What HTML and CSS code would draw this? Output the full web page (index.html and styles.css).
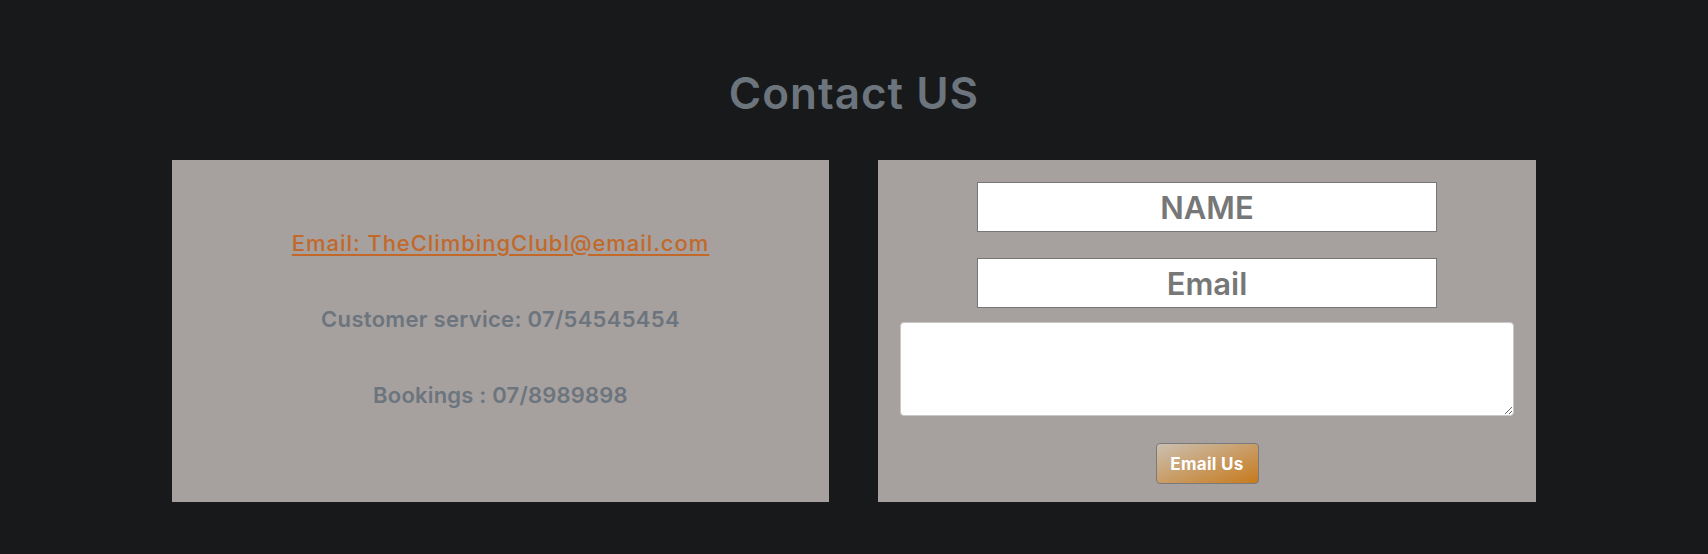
FILE: index.html
```html
<!DOCTYPE html>
<html lang="en">
<head>
<meta charset="utf-8">
<title>Contact US</title>
<link rel="stylesheet" href="styles.css">
</head>
<body>
<section class="contact">
  <h1 class="contact-title">Contact US</h1>
  <div class="cards">
    <div class="card card-info">
      <a class="info-link" href="#">Email: TheClimbingClubl@email.com</a>
      <p class="info-line">Customer service: 07/54545454</p>
      <p class="info-line info-line-short">Bookings : 07/8989898</p>
    </div>
    <form class="card card-form">
      <input class="field" type="text" placeholder="NAME">
      <input class="field field-email" type="email" placeholder="Email">
      <textarea class="message"></textarea>
      <button class="send" type="button">Email Us</button>
    </form>
  </div>
</section>
</body>
</html>
```
FILE: styles.css
```css
* { box-sizing: border-box; }

body {
  margin: 0;
  background: #18191b;
  font-family: Inter, "Open Sans", "Liberation Sans", sans-serif;
}

.contact {
  padding-top: 67px;
}

.contact-title {
  margin: 0;
  text-align: center;
  color: #6c757d;
  font-size: 44px;
  font-weight: 600;
  line-height: 53px;
  letter-spacing: 1px;
}

.cards {
  display: flex;
  justify-content: center;
  gap: 49px;
  margin-top: 40px;
}

.card {
  width: 657px;
  height: 342px;
  background: #a6a09f;
  margin: 0;
}

.card-info {
  display: flex;
  flex-direction: column;
  align-items: center;
  padding-top: 67px;
  gap: 43px;
}

.info-link {
  color: #c2692a;
  font-size: 22px;
  font-weight: 500;
  line-height: 33px;
  letter-spacing: 0.95px;
  text-decoration: underline;
  text-decoration-thickness: 2px;
  text-underline-offset: 3px;
}

.info-line {
  margin: 0;
  color: #6c757d;
  font-size: 22px;
  font-weight: 600;
  line-height: 33px;
  letter-spacing: 0.3px;
}

.info-line-short {
  letter-spacing: 0.2px;
}

.card-form {
  width: 658px;
  display: flex;
  flex-direction: column;
  align-items: center;
  padding: 22px 22px 0;
}

.field {
  width: 460px;
  height: 50px;
  border: 1px solid #767676;
  background: #fff;
  font-family: inherit;
  font-size: 31px;
  font-weight: 600;
  text-align: center;
  color: #777;
  padding: 0;
}

.field::placeholder {
  color: #777;
  opacity: 1;
}

.field-email {
  margin-top: 26px;
}

.message {
  width: 614px;
  height: 94px;
  margin-top: 14px;
  border: 1px solid #c8c8c8;
  border-radius: 4px;
  background: #fff;
  resize: both;
}

.send {
  margin-top: 27px;
  width: 103px;
  height: 41px;
  border: 1px solid #7a7a7a;
  border-radius: 4px;
  background: linear-gradient(to bottom right, #cbc0b2, #c77a1c);
  color: #fff;
  font-family: inherit;
  font-size: 17px;
  font-weight: 700;
  letter-spacing: 0.3px;
  padding: 0;
}
```
